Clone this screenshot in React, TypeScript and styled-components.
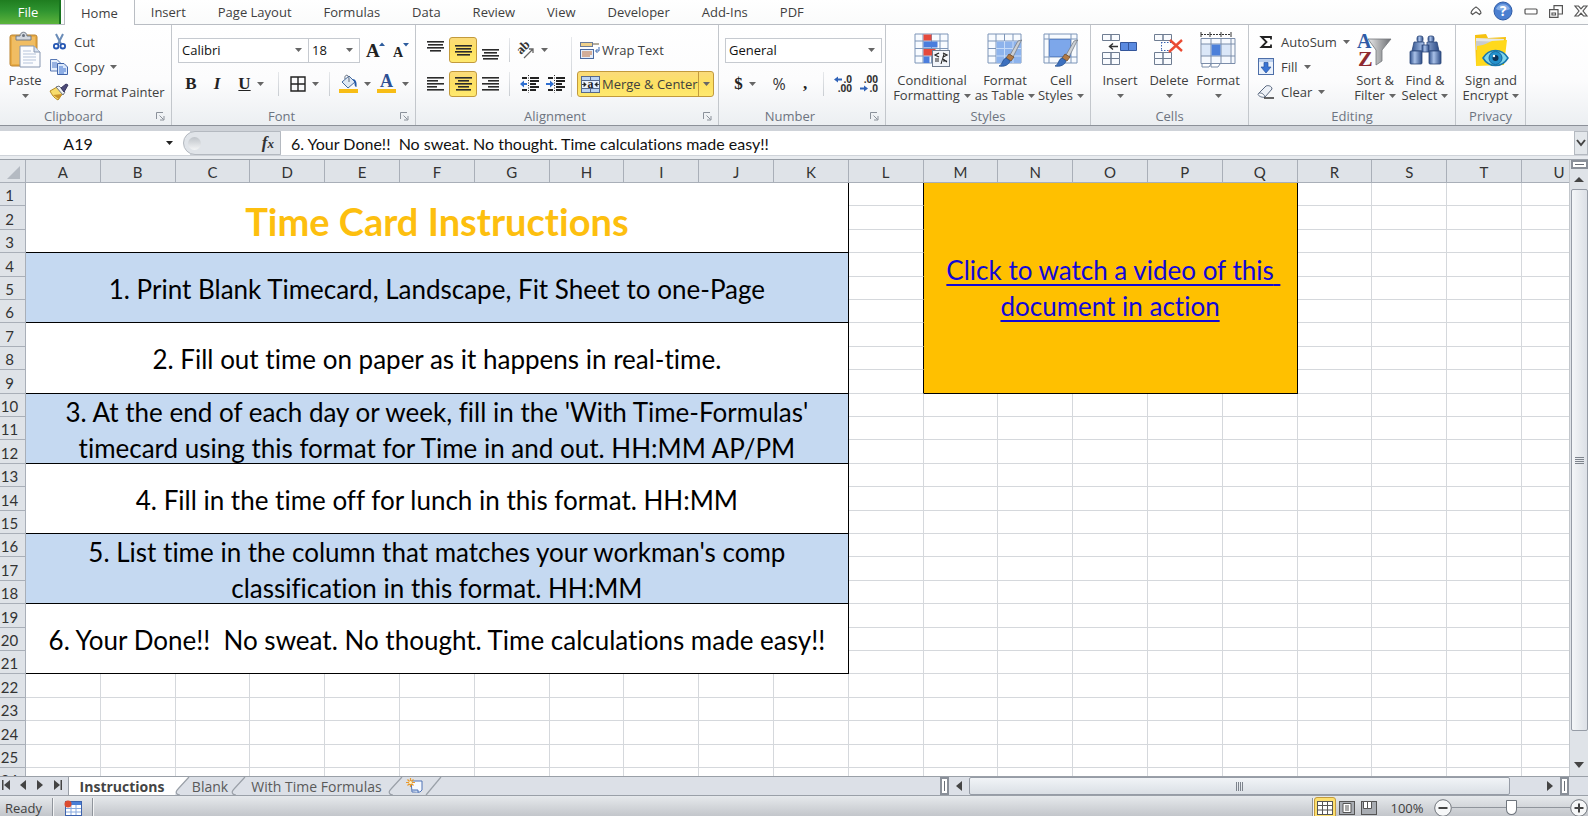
import React from "react";
import styled, { createGlobalStyle, css } from "styled-components";

const ui = `"Open Sans", "Noto Sans", sans-serif`;
const sheet = `Lato, "Open Sans", sans-serif`;

const Global = createGlobalStyle`
  *, *::before, *::after { box-sizing: border-box; }
  body {
    margin: 0;
    background: #fff;
    font-family: ${ui};
    font-size: 13px;
    font-variant-ligatures: none;
    color: #3f3f3f;
    overflow: hidden;
  }
  button, select, input { font: inherit; font-variant-ligatures: none; color: inherit; }
  button { border: 0; background: none; padding: 0; margin: 0; }
  svg { display: block; flex: none; overflow: visible; }
`;

const Window = styled.div`
  display: flex;
  flex-direction: column;
  height: 100vh;
  min-height: 500px;
  overflow: hidden;
`;

/* ---------- tab strip ---------- */

const TabStrip = styled.header`
  display: flex;
  height: 25px;
  flex: none;
  background: linear-gradient(#fff, #fafbfb);
  border-bottom: 1px solid #b9bdc3;
`;

const FileTab = styled.button`
  width: 61px;
  height: 24px;
  padding-right: 5px;
  color: #fff;
  background: linear-gradient(#1f7d20, #2f9430 45%, #5db43c);
  box-shadow: inset -2px 0 #16731d;
`;

const TabList = styled.nav`
  display: flex;
  margin-left: 3px;
`;

const Tab = styled.button<{ $active?: boolean }>`
  height: 24px;
  padding: 0 16px;
  ${(p) =>
    p.$active &&
    css`
      height: 25px;
      background: #fff;
      border: 1px solid #b9bdc3;
      border-top: 0;
      border-bottom: 0;
    `}
`;

const WindowTools = styled.div`
  display: flex;
  align-items: center;
  gap: 11px;
  margin-left: auto;
  height: 22px;
`;

/* ---------- ribbon ---------- */

const Ribbon = styled.section`
  display: flex;
  flex: none;
  height: 101px;
  overflow: hidden;
  background: linear-gradient(#fff, #fcfcfd 55%, #eceff2);
  border-bottom: 1px solid #8c9199;
`;

const GroupBox = styled.section<{ $width: number }>`
  display: flex;
  flex-direction: column;
  flex: none;
  width: ${(p) => p.$width}px;
  border-right: 1px solid #c3c7cc;
`;

const GroupBody = styled.div<{ $pad?: number }>`
  display: flex;
  flex: 1;
  padding: 4px 0 0 ${(p) => p.$pad ?? 4}px;
`;

const Caption = styled.footer<{ $launcher?: boolean }>`
  position: relative;
  height: 18px;
  line-height: 18px;
  padding-right: ${(p) => (p.$launcher ? 24 : 0)}px;
  text-align: center;
  color: #6d7480;
`;

const Launcher = styled.button`
  position: absolute;
  right: 6px;
  bottom: 4px;
`;

const BigButton = styled.button<{ $width: number }>`
  display: flex;
  flex-direction: column;
  align-items: center;
  flex: none;
  width: ${(p) => p.$width}px;
  padding-top: 3px;
  line-height: 15px;
  white-space: nowrap;
`;

const IconBox = styled.span`
  display: flex;
  align-items: center;
  justify-content: center;
  height: 36px;
  margin-bottom: 5px;
`;

const BigLine = styled.span`
  display: flex;
  align-items: center;
  gap: 4px;
  height: 15px;
`;

const SmallStack = styled.div`
  display: flex;
  flex-direction: column;
  align-items: flex-start;
`;

const EditingStack = styled(SmallStack)`
  width: 93px;
`;

const SmallButton = styled.button`
  display: flex;
  align-items: center;
  gap: 6px;
  height: 25px;
  white-space: nowrap;
`;

const IconSlot = styled.span`
  display: flex;
  justify-content: center;
  width: 18px;
`;

const Rows = styled.div`
  display: flex;
  flex-direction: column;
  gap: 8px;
  padding-top: 8px;
`;

const Row = styled.div`
  display: flex;
  align-items: center;
  height: 26px;
`;

const Tool = styled.button<{ $width: number; $on?: boolean }>`
  display: flex;
  align-items: center;
  justify-content: center;
  gap: 6px;
  flex: none;
  width: ${(p) => p.$width}px;
  height: 26px;
  ${(p) =>
    p.$on &&
    css`
      background: linear-gradient(#fbdb7a, #fde162 50%, #ffe96f);
      border: 1px solid #c29a3c;
      border-radius: 3px;
    `}
`;

const GlyphTool = styled(Tool)`
  font-family: "Liberation Serif", serif;
  font-size: 17px;
  font-weight: bold;
  color: #222;
`;

const Percent = styled.span`
  font-size: 16px;
  color: #333;
`;

const Divider = styled.span`
  flex: none;
  width: 1px;
  height: 24px;
  margin: 0 6px;
  background: linear-gradient(#e6e8eb, #c9cdd2);
`;

const TallDivider = styled(Divider)`
  height: 60px;
  margin: 8px 5px 0 3px;
`;

const PickerBox = styled.span<{ $width: number }>`
  display: flex;
  align-items: center;
  width: ${(p) => p.$width}px;
  height: 25px;
  padding-right: 6px;
  border: 1px solid #c6cad0;
  background: #fff;
  & + & { margin-left: -1px; }
`;

const Picker = styled.select`
  appearance: none;
  flex: 1;
  min-width: 0;
  height: 23px;
  padding: 0 3px;
  border: 0;
  background: none;
  color: #111;
`;

const LabelTool = styled.button`
  display: flex;
  align-items: center;
  gap: 2px;
  height: 26px;
  padding-left: 3px;
  white-space: nowrap;
`;

const MergeBox = styled.div`
  display: flex;
  height: 26px;
  background: linear-gradient(#fbdb7a, #fde162 50%, #ffe96f);
  border: 1px solid #c29a3c;
  border-radius: 3px;
`;

const MergeMain = styled.button`
  display: flex;
  align-items: center;
  gap: 2px;
  width: 120px;
  padding-left: 3px;
  white-space: nowrap;
`;

const MergeMore = styled.button`
  display: flex;
  align-items: center;
  justify-content: center;
  width: 15px;
  border-left: 1px solid #c29a3c;
`;

/* ---------- formula bar ---------- */

const FormulaBar = styled.section`
  display: flex;
  flex: none;
  height: 34px;
  padding: 5px 0;
  background: #cfd3d9;
  border-bottom: 1px solid #9aa0a8;
  box-shadow: inset 0 -3px #e8ebef;
  font-family: ${sheet};
  font-size: 16px;
  color: #111;
`;

const NameBox = styled.label`
  display: flex;
  align-items: center;
  width: 190px;
  height: 24px;
  padding-right: 14px;
  background: #fff;
`;

const NameInput = styled.input`
  width: 156px;
  margin-right: 10px;
  border: 0;
  outline: 0;
  background: none;
  text-align: center;
`;

const FxPill = styled.div`
  display: flex;
  align-items: center;
  justify-content: space-between;
  width: 98px;
  height: 24px;
  margin-left: -7px;
  padding: 0 6px 0 4px;
  background: #e0e4e9;
  border: 1px solid #b4b9c0;
  border-radius: 12px 0 0 12px;
`;

const Knob = styled.span`
  width: 13px;
  height: 13px;
  border-radius: 50%;
  background: linear-gradient(#bfc4ca, #f4f5f6);
`;

const FxButton = styled.button`
  font: italic bold 17px "Liberation Serif", serif;
  color: #333;
  small { font-size: 13px; }
`;

const FormulaInput = styled.input`
  flex: 1;
  min-width: 0;
  height: 24px;
  padding: 0 10px;
  border: 0;
  outline: 0;
  background: #fff;
`;

const ExpandButton = styled.button`
  display: flex;
  align-items: center;
  justify-content: center;
  width: 14px;
  height: 24px;
  background: #e3e7eb;
  border: 1px solid #b4b9c0;
`;

/* ---------- worksheet ---------- */

const SheetArea = styled.main`
  display: flex;
  flex: 1;
  min-height: 0;
`;

const GridView = styled.div`
  flex: 1;
  min-width: 0;
  overflow: hidden;
`;

const Grid = styled.table`
  width: calc(100% + 28px);
  table-layout: fixed;
  border-collapse: separate;
  border-spacing: 0;
  font-family: ${sheet};
`;

const headCell = css`
  font-size: 15px;
  line-height: 20px;
  font-weight: normal;
  color: #333;
  background: #dfe3e8;
  border-right: 1px solid #a9afb8;
  border-bottom: 1px solid #a9afb8;
`;

const CornerCell = styled.td`
  width: 26px;
  height: 23px;
  padding: 0 5px 3px 0;
  vertical-align: bottom;
  ${headCell}
  svg { margin-left: auto; }
`;

const ColHead = styled.th`
  height: 23px;
  padding: 2px 0 0;
  ${headCell}
`;

const SheetRow = styled.tr`
  height: 23px;
  &:nth-child(5n + 2), &:nth-child(5n + 4) { height: 24px; }
`;

const RowHead = styled.th`
  padding: 2px 6px 0 0;
  text-align: center;
  ${headCell}
`;

const Cell = styled.td<{ $edge?: boolean }>`
  padding: 0;
  border-right: 1px solid ${(p) => (p.$edge ? "#000" : "#d5d8dc")};
  border-bottom: 1px solid #d5d8dc;
`;

const MergedCell = styled.td<{ $shaded?: boolean }>`
  padding: 0 8px;
  text-align: center;
  white-space: pre-wrap;
  font-size: 26px;
  line-height: 36px;
  color: #000;
  background: ${(p) => (p.$shaded ? "#c5d9f1" : "#fff")};
  border-right: 1px solid #000;
  border-bottom: 1px solid #000;
`;

const CellText = styled.div`
  height: 69px;
  padding-top: 2px;
  display: flex;
  align-items: center;
  justify-content: center;
`;

const TitleText = styled(CellText)`
  padding-top: 6px;
  font-size: 38px;
  font-weight: bold;
  color: #fdbf0f;
`;

const VideoCell = styled(MergedCell)`
  background: #ffc000;
`;

const VideoLink = styled.a`
  color: #1208d8;
  text-decoration: underline;
  text-decoration-thickness: 2px;
  text-underline-offset: 4px;
`;

/* ---------- scroll bars, sheet tabs, status ---------- */

const VScroll = styled.aside`
  display: flex;
  flex-direction: column;
  align-items: center;
  flex: none;
  width: 19px;
  padding-bottom: 1px;
  background: #dfe3e8;
  border-left: 1px solid #c3c7cc;
`;

const SplitBox = styled.button<{ $tall?: boolean }>`
  display: flex;
  align-items: center;
  justify-content: center;
  flex: none;
  width: ${(p) => (p.$tall ? 9 : 17)}px;
  height: ${(p) => (p.$tall ? 18 : 9)}px;
  background: #fff;
  border: 2px solid #8a9099;
  &::after {
    content: "";
    width: ${(p) => (p.$tall ? 1 : 9)}px;
    height: ${(p) => (p.$tall ? 10 : 1)}px;
    background: #6b7078;
  }
`;

const ScrollButton = styled.button`
  display: flex;
  align-items: center;
  justify-content: center;
  flex: none;
  width: 20px;
  height: 20px;
`;

const VTrack = styled.div`
  flex: 1;
  width: 17px;
  padding-bottom: 24px;
`;

const VThumb = styled.div`
  display: flex;
  align-items: center;
  justify-content: center;
  height: 100%;
  background: linear-gradient(90deg, #f4f6f8, #dce0e6);
  border: 1px solid #969ca6;
  border-radius: 2px;
`;

const BottomBar = styled.footer`
  display: flex;
  flex: none;
  height: 20px;
  background: #dce0e7;
  border-top: 1px solid #9aa0a8;
  border-bottom: 1px solid #9aa0a8;
`;

const SheetNav = styled.div`
  display: flex;
  align-items: center;
  width: 69px;
  padding-bottom: 2px;
  border-right: 1px solid #9aa0a8;
`;

const NavButton = styled.button`
  display: flex;
  align-items: center;
  justify-content: center;
  width: 17px;
  height: 16px;
  &:first-child { width: 14px; }
`;

const SheetTabs = styled.nav`
  display: flex;
`;

const SheetTab = styled.button<{ $active?: boolean; $width: number }>`
  display: flex;
  align-items: center;
  justify-content: center;
  width: ${(p) => p.$width}px;
  height: 18px;
  font-size: 14px;
  white-space: nowrap;
  color: #5a5a5a;
  ${(p) =>
    p.$active &&
    css`
      font-weight: bold;
      color: #444;
      background: #fff;
    `}
`;

const HScroll = styled.div`
  display: flex;
  align-items: center;
  width: calc(40% - 6px);
  margin-left: auto;
  margin-right: 19px;
`;

const HTrack = styled.div`
  flex: 1;
  padding-right: 30px;
`;

const HThumb = styled.div`
  display: flex;
  align-items: center;
  justify-content: center;
  height: 18px;
  background: linear-gradient(#f1f4f7, #dadfe5);
  border: 1px solid #969ca6;
  border-radius: 2px;
`;

const StatusBar = styled.footer`
  display: flex;
  align-items: center;
  flex: none;
  height: 20px;
  padding: 3px 0 0 5px;
  overflow: hidden;
  background: linear-gradient(#e6e9ec, #c3c6cb);
`;

const StatusSep = styled.span`
  flex: none;
  width: 2px;
  height: 20px;
  background: #8f949b;
  border-right: 1px solid #f3f4f5;
`;

const StatusLabel = styled.span`
  width: 47px;
`;

const MacroButton = styled.button`
  width: 38px;
  display: flex;
  justify-content: center;
`;

const StatusRight = styled.div`
  display: flex;
  align-items: center;
  margin-left: auto;
`;

const ViewButton = styled.button<{ $on?: boolean }>`
  display: flex;
  align-items: center;
  justify-content: center;
  width: 22px;
  height: 22px;
  border: 1px solid ${(p) => (p.$on ? "#c29a3c" : "transparent")};
  border-radius: 3px;
  background: ${(p) => (p.$on ? "#fde070" : "none")};
`;

const ZoomLabel = styled.button`
  width: 54px;
  text-align: center;
`;

const Slider = styled.input`
  appearance: none;
  width: 118px;
  height: 18px;
  margin: 0;
  background: linear-gradient(#8f949b, #8f949b) center / 100% 1px no-repeat;
  &::-webkit-slider-thumb {
    appearance: none;
    width: 11px;
    height: 15px;
    background: #fff;
    border: 1px solid #6f757d;
    border-radius: 1px 1px 6px 6px;
  }
`;

/* ---------- drawings ---------- */

const Down = ({ dark }: { dark?: boolean }) => (
  <svg width="7" height="4" viewBox="0 0 7 4" aria-hidden="true">
    <path d="M0 0h7L3.5 4z" fill={dark ? "#222" : "#666"} />
  </svg>
);

const LaunchIcon = () => (
  <svg width="9" height="9" viewBox="0 0 9 9" fill="none" stroke="#8b919a">
    <path d="M.5 7V.5H7M3.5 3.5l4 4M8 4v4H4" />
  </svg>
);

const PasteIcon = () => (
  <svg width="32" height="36" viewBox="0 0 32 36">
    <rect x="1" y="3" width="27" height="31" rx="2" fill="#e9ac45" stroke="#bb8433" />
    <path d="M3 5h23v27H3z" fill="#f0bd63" />
    <path d="M7 8V4h4c0-5 7-5 7 0h4v4z" fill="#d3d8df" stroke="#737b87" />
    <circle cx="14.500" cy="3.500" r="1.500" fill="#68717f" />
    <path d="M11 14h14l6 6v15H11z" fill="#fbfcfe" stroke="#8696b0" />
    <path d="M25 14v6h6" fill="#d8e2f0" stroke="#8696b0" />
    <path d="M14 19h8M14 22h13M14 25h13M14 28h13M14 31h10" stroke="#b5c3d9" />
  </svg>
);

const CutIcon = () => (
  <svg width="13" height="16" viewBox="0 0 13 16" fill="none">
    <path d="M3 0l5 10M10 0L5 10" stroke="#6b8cb8" strokeWidth="2" />
    <circle cx="3.200" cy="12.200" r="2.300" stroke="#2456b3" strokeWidth="1.800" />
    <circle cx="9.800" cy="12.200" r="2.300" stroke="#2456b3" strokeWidth="1.800" />
  </svg>
);

const CopyIcon = () => (
  <svg width="18" height="16" viewBox="0 0 18 16">
    <path d="M.5.5H7L10.500 4v8H.5z" fill="#e6eefb" stroke="#5878b4" />
    <path d="M2 4h5M2 6h6M2 8h6" stroke="#4b77c9" />
    <path d="M7.500 4.500H14L17.500 8v7.500h-10z" fill="#dbe8fb" stroke="#3f63a8" />
    <path d="M9 8h4M9 10h7M9 12h7M9 14h5" stroke="#3f72cf" />
  </svg>
);

const BrushIcon = () => (
  <svg width="18" height="16" viewBox="0 0 18 16">
    <path d="M0 7l7-4 6 6-5 7C4 14 2 11 0 7z" fill="#f7dc6c" stroke="#b58a24" />
    <path d="M3 11l6 4 3-5z" fill="#c9922a" />
    <path d="M6 3l3-1 6 6-2 3z" fill="#eef1f5" stroke="#6d7480" />
    <path d="M11 4l5-4 2 1-4 7z" fill="#4c4a78" stroke="#37355e" />
  </svg>
);

const GrowA = ({ small }: { small?: boolean }) => (
  <svg width="19" height="20" viewBox="0 0 19 20">
    <text x="0" y="17" fontFamily="Liberation Serif, serif" fontWeight="bold" fontSize={small ? 14 : 19} fill="#222">A</text>
    <path d={small ? "M10 3h6l-3 3.500z" : "M13 6h6l-3-3.500z"} fill="#2d5c9e" />
  </svg>
);

const BorderIcon = () => (
  <svg width="16" height="16" viewBox="0 0 16 16" fill="none" stroke="#222" strokeWidth="1.400">
    <path d="M1 1h14v14H1zM8 1v14M1 8h14" />
  </svg>
);

const FillColorIcon = () => (
  <svg width="19" height="18" viewBox="0 0 19 18">
    <path d="M3 7l7-6 6 6-7 6z" fill="#dfe9f5" stroke="#46699d" />
    <path d="M6 4c-1-5 4-5 4 0v3" fill="none" stroke="#5e6a7c" />
    <path d="M13 4c4 0 5 3 4.500 8-2 0-2-3-2-5z" fill="#245aa8" />
    <path d="M0 14h19v4H0z" fill="#f7bd16" />
  </svg>
);

const FontColorIcon = () => (
  <svg width="19" height="18" viewBox="0 0 19 18">
    <text x="9.500" y="12" textAnchor="middle" fontFamily="Liberation Serif, serif" fontWeight="bold" fontSize="18" fill="#2d4f93">A</text>
    <path d="M0 14h19v4H0z" fill="#f7bd16" />
  </svg>
);

const barSets: Record<string, [number, number, number][]> = {
  top: [[0, 0, 17], [1, 3, 15], [0, 6, 17], [3, 9, 11]],
  middle: [[0, 4, 17], [1, 7, 15], [0, 10, 17], [2, 13, 13]],
  bottom: [[0, 8, 17], [2, 11, 13], [0, 14, 17], [1, 17, 15]],
  left: [[0, 2, 17], [0, 5, 11], [0, 8, 17], [0, 11, 10], [0, 14, 17]],
  center: [[0, 2, 17], [3, 5, 11], [0, 8, 17], [3, 11, 11], [1, 14, 15]],
  right: [[0, 2, 17], [6, 5, 11], [0, 8, 17], [6, 11, 11], [0, 14, 17]],
};

const Bars = ({ kind }: { kind: string }) => (
  <svg width="17" height="19" viewBox="0 0 17 19">
    {barSets[kind].map(([x, y, w]) => (
      <rect key={y} x={x} y={y} width={w} height="1.600" fill="#2b2b2b" />
    ))}
  </svg>
);

const OrientIcon = () => (
  <svg width="19" height="18" viewBox="0 0 19 18">
    <text transform="translate(5 14) rotate(-45)" fontFamily="Liberation Serif, serif" fontWeight="bold" fontSize="13" fill="#333">ab</text>
    <path d="M8 17l9-9M17 12V8h-4" fill="none" stroke="#666" strokeWidth="1.300" />
  </svg>
);

const IndentIcon = ({ inward }: { inward?: boolean }) => (
  <svg width="19" height="18" viewBox="0 0 19 18">
    <path d="M8.500 0v18" stroke="#333" strokeDasharray="1 1.500" />
    <path d="M2 3h5M10 3h9M10 6h9M10 9h6M10 12h9M2 15h5M10 15h6" stroke="#222" strokeWidth="1.800" />
    <path d={inward ? "M8 9L4 5.500V8H0v2h4v2.500z" : "M0 9l4-3.500V8h3v2H4v2.500z"} fill="#2f6fd0" />
  </svg>
);

const WrapIcon = () => (
  <svg width="20" height="18" viewBox="0 0 20 18">
    <rect x=".5" y="1.500" width="12" height="4" fill="#f0d18a" stroke="#6b7c99" />
    <path d="M13 3h6" stroke="#6b5a3c" />
    <rect x=".5" y="8.500" width="13" height="9" fill="#e4edf9" stroke="#4a6aa0" />
    <path d="M2 11h10M2 13h10M2 15h8" stroke="#c06e39" />
    <path d="M19 6v4h-3M17.500 8L15.500 10l2 2" fill="none" stroke="#3566b0" />
  </svg>
);

const MergeIcon = () => (
  <svg width="19" height="17" viewBox="0 0 19 17">
    <rect x=".5" y=".5" width="18" height="16" fill="#bcd4f4" stroke="#56698c" />
    <path d="M0 4.500h19M0 12.500h19M9.500 0v4M9.500 13v4" stroke="#56698c" />
    <rect x="1" y="5" width="17" height="7" fill="#eaf2fd" />
    <path d="M1 8.500h4M14 8.500h4M3 6.500v4l2-2zM16 6.500v4l-2-2z" stroke="#222" fill="#222" strokeWidth=".8" />
    <text x="9.500" y="12" textAnchor="middle" fontFamily="Liberation Serif, serif" fontWeight="bold" fontSize="12" fill="#222">a</text>
  </svg>
);

const DecimalIcon = ({ less }: { less?: boolean }) => (
  <svg width="20" height="18" viewBox="0 0 20 18">
    <g fontFamily="Open Sans, sans-serif" fontWeight="bold" fontSize="10" fill="#333" textAnchor="end">
      <text x="19" y="8">{less ? ".00" : ".0"}</text>
      <text x="19" y="17">{less ? ".0" : ".00"}</text>
    </g>
    <path d={less ? "M9 13.500l-4-3v2H1v2h4v2z" : "M1 4.500l4-3v2h4v2H5v2z"} fill="#2f62b8" />
  </svg>
);

const GridLines = ({ head }: { head?: boolean }) => (
  <>
    <path d="M1 1h33v29H1z" fill="#f8fbff" stroke="#7d95b8" />
    <path d={head ? "M1 6h33M1 24h33M6 1v29M28 1v29" : "M1 8h33M1 15.500h33M1 23h33M9 1v29M17.500 1v29M26 1v29"} stroke="#7d95b8" />
  </>
);

const PaintBrush = () => (
  <>
    <path d="M34 8L26 24l-3-2 8-14 4-1z" fill="#ccd0d5" stroke="#777d86" strokeWidth=".8" />
    <path d="M22 21l5 3-3 4-5-3z" fill="#b27a45" stroke="#6f4c2c" strokeWidth=".8" />
    <path d="M12 33c4-1 3-7 7-8l4 3c-1 4-6 6-11 5z" fill="#3d70be" stroke="#25508f" strokeWidth=".8" />
  </>
);

const ConditionalIcon = () => (
  <svg width="36" height="34" viewBox="0 0 36 34">
    <GridLines />
    <path d="M9.500 1.500h8v6h-8z" fill="#e5493c" />
    <path d="M9.500 8.500h14v6h-14z" fill="#4a7ddd" />
    <path d="M9.500 16h12v6.500h-12z" fill="#e5493c" />
    <path d="M9.500 23.500h6V30h-6z" fill="#4a7ddd" />
    <rect x="18.500" y="17.500" width="17" height="16" fill="#f2f5fa" stroke="#707c8f" />
    <path d="M25 20l-4 2 4 2M21 26h4M21 28h4M29 20l4 2-4 2M29 26l4 3M29 28h4" fill="none" stroke="#222" strokeWidth="1.200" />
    <path d="M27 31l3-10" stroke="#222" />
  </svg>
);

const TableIcon = () => (
  <svg width="36" height="34" viewBox="0 0 36 34">
    <GridLines />
    <path d="M9.500 8.500H34V30H9.500z" fill="#8db3ec" />
    <path d="M9 15.500h25M9 23h25M17.500 8v22M26 8v22" stroke="#c6dbf8" />
    <PaintBrush />
  </svg>
);

const StylesIcon = () => (
  <svg width="36" height="34" viewBox="0 0 36 34">
    <GridLines head />
    <path d="M6.500 6.500h21v17h-21z" fill="#7da7ea" stroke="#5f88cc" />
    <PaintBrush />
  </svg>
);

const Blocks = ({ y, rows }: { y: number; rows: number }) => (
  <g fill="#f9fbfe" stroke="#6f7d92">
    {Array.from({ length: rows }, (_, i) => (
      <path key={i} d={`M.5 ${y + i * 6}h8.500v6H.5zM9 ${y + i * 6}h8.500v6H9z`} />
    ))}
  </g>
);

const InsertIcon = () => (
  <svg width="36" height="34" viewBox="0 0 36 34">
    <Blocks y={1.5} rows={1} />
    <Blocks y={19.5} rows={2} />
    <path d="M18.500 9.500h8v8h-8zM26.500 9.500h8v8h-8z" fill="#5a8ae0" stroke="#33559a" />
    <path d="M8 13.500h8M11 10.500l-3.500 3 3.500 3" fill="none" stroke="#333" strokeWidth="1.400" />
  </svg>
);

const DeleteIcon = () => (
  <svg width="30" height="34" viewBox="0 0 30 34">
    <Blocks y={1.5} rows={1} />
    <Blocks y={19.5} rows={2} />
    <path d="M7 9.500h11M7 17.500h11M7.500 9v9" stroke="#3d62ae" strokeDasharray="1.500 1.500" />
    <path d="M16 7l12 11M28 7L15 19" stroke="#ea4b33" strokeWidth="2.400" />
  </svg>
);

const FormatIcon = () => (
  <svg width="36" height="36" viewBox="0 0 36 36">
    <path d="M1 0v5M31 0v5M10 0v5M21 0v5" stroke="#333" />
    <path d="M1 2.500h30" stroke="#333" strokeDasharray="2 1" />
    <path d="M1 6.500h34v25H1z" fill="#f6f9fe" stroke="#7b8daa" />
    <path d="M2 12h9v12H2zM21 12h9v12h-9z" fill="#dbe7f8" />
    <path d="M1 12h34M1 24h34M11 6v25M21 6v25M31 6v25" stroke="#7b8daa" />
    <path d="M11.500 12.500h9v11h-9z" fill="#4d80da" />
    <path d="M2 32v3h7l2-3M11 32v3h7l2-3" fill="#fff" stroke="#7b8daa" />
  </svg>
);

const SigmaIcon = () => (
  <svg width="12" height="12" viewBox="0 0 12 12" fill="none" stroke="#222" strokeWidth="1.800">
    <path d="M11 3.500V1H1.500l5 5-5 5H11V8.500" />
  </svg>
);

const FillIcon = () => (
  <svg width="16" height="17" viewBox="0 0 16 17">
    <rect x=".5" y=".5" width="15" height="16" fill="#eaf1fb" stroke="#4d6ea8" />
    <path d="M1 1h14v3H1z" fill="#bacfee" />
    <path d="M6 4.500h4V9h3l-5 6-5-6h3z" fill="#3a74d4" stroke="#28539c" strokeWidth=".7" />
  </svg>
);

const ClearIcon = () => (
  <svg width="18" height="14" viewBox="0 0 18 14">
    <path d="M1 9l8-8c2-1 6 0 6 3l-7 8c-3 1-7-1-7-3z" fill="#eef2f8" stroke="#5a6880" />
    <path d="M1 9c1-2 6-1 7 3" fill="#fff" stroke="#5a6880" />
    <path d="M7 13h10" stroke="#333" strokeWidth="1.500" />
  </svg>
);

const SortIcon = () => (
  <svg width="36" height="34" viewBox="0 0 36 34">
    <defs>
      <linearGradient id="funnel"><stop stopColor="#e9e9e9" /><stop offset="1" stopColor="#6c6f73" /></linearGradient>
    </defs>
    <path d="M11 6h23L25 17v11l-6 4V17z" fill="url(#funnel)" stroke="#74777b" strokeWidth=".8" />
    <text x="0" y="15" fontFamily="Liberation Serif, serif" fontWeight="bold" fontSize="20" fill="#2f5ba6">A</text>
    <text x="1" y="33" fontFamily="Liberation Serif, serif" fontWeight="bold" fontSize="22" fill="#8f2a30">Z</text>
  </svg>
);

const FindIcon = () => (
  <svg width="33" height="32" viewBox="0 0 33 32">
    <defs>
      <linearGradient id="lens"><stop stopColor="#34558f" /><stop offset=".4" stopColor="#a9c1e8" /><stop offset="1" stopColor="#2c4b85" /></linearGradient>
    </defs>
    <g fill="url(#lens)" stroke="#2c467a" strokeWidth=".8">
      <rect x="8" y="2" width="6" height="6" rx="2" />
      <rect x="19" y="2" width="6" height="6" rx="2" />
      <path d="M5 8h10v9H3zM18 8h10l2 9H18z" />
      <rect x="13" y="11" width="7" height="7" />
      <rect x="1" y="17" width="12" height="13" rx="1" />
      <rect x="20" y="17" width="12" height="13" rx="1" />
    </g>
  </svg>
);

const PrivacyIcon = () => (
  <svg width="34" height="35" viewBox="0 0 34 35">
    <path d="M1 2l11-1 2 4 18-1-2 27-28 1z" fill="#f6c211" />
    <path d="M2 5l28 1-1 8H2z" fill="#e4e6e8" />
    <path d="M2 8l28 1-1 8H2z" fill="#c8cbce" />
    <path d="M2 33l1-20c9-1 12-4 15-5l15-1-3 25z" fill="#ffd91c" />
    <path d="M9 25c6-10 19-10 25 0-6 10-19 10-25 0z" fill="#7fd6ec" stroke="#1777ad" strokeWidth="1.500" />
    <circle cx="21.500" cy="25" r="6.500" fill="#2391cc" stroke="#14659e" />
    <circle cx="21.500" cy="25" r="3" fill="#0c3256" />
    <circle cx="20" cy="23" r="1.200" fill="#fff" />
  </svg>
);

const CollapseIcon = () => (
  <svg width="12" height="10" viewBox="0 0 12 10">
    <path d="M1 7c0-2 3-5 5-6 2 1 5 4 5 6L9.500 8.500 6 6 2.500 8.500z" fill="#fff" stroke="#555" strokeWidth="1.200" />
  </svg>
);

const HelpIcon = () => (
  <svg width="20" height="20" viewBox="0 0 20 20">
    <circle cx="10" cy="10" r="9" fill="#4a7fd0" stroke="#2e5ba6" />
    <path d="M3 8a7.500 7.500 0 0 1 14 0c-4 2-10 2-14 0z" fill="#86aee6" />
    <text x="10" y="15" textAnchor="middle" fontFamily="Open Sans, sans-serif" fontWeight="bold" fontSize="14" fill="#fff">?</text>
  </svg>
);

const MinIcon = () => (
  <svg width="14" height="8" viewBox="0 0 14 8">
    <rect x="1" y="2" width="12" height="5" rx="1" fill="#fff" stroke="#555" strokeWidth="1.200" />
  </svg>
);

const RestoreIcon = () => (
  <svg width="14" height="13" viewBox="0 0 14 13" fill="#fff" stroke="#555" strokeWidth="1.200">
    <path d="M5 .600h8.400V9H5z" />
    <path d="M.600 4.600H9V12.400H.600zM3 8h3.500v2H3z" />
  </svg>
);

const CloseIcon = () => (
  <svg width="14" height="12" viewBox="0 0 14 12">
    <path d="M1 1h3.500L7 3.800 9.500 1H13L9 6l4 5H9.500L7 8.200 4.500 11H1l4-5z" fill="#fff" stroke="#555" strokeWidth="1.200" />
  </svg>
);

const Triangle = ({ dir, bar }: { dir: "left" | "right" | "up" | "down"; bar?: boolean }) => {
  const d = {
    left: "M8 0L2 5l6 5z",
    right: "M2 0l6 5-6 5z",
    up: "M0 8l5-5 5 5z",
    down: "M0 2h10L5 8z",
  }[dir];
  return (
    <svg width="10" height="10" viewBox="0 0 10 10" fill="#444">
      <path d={d} />
      {bar && <path d={dir === "left" ? "M0 0h1.500v10H0z" : "M8.500 0H10v10H8.500z"} />}
    </svg>
  );
};

const Grip = ({ turned }: { turned?: boolean }) => (
  <svg width="9" height="9" viewBox="0 0 9 9" stroke="#7d838c">
    <path d={turned ? "M0 1.500h9M0 3.500h9M0 5.500h9M0 7.500h9" : "M1.500 0v9M3.500 0v9M5.500 0v9M7.500 0v9"} />
  </svg>
);

const Edge = ({ active, last }: { active?: boolean; last?: boolean }) => (
  <svg width="14" height="18" viewBox="0 0 14 18">
    {active && <path d="M0 0h14L3 12Q0 15 0 18z" fill="#fff" />}
    <path
      d={last ? "M15 0L0 18" : "M14 0L3 12Q0 15 2 17q1 1 3 1"}
      fill="none"
      stroke="#9aa0a8"
      strokeWidth="1.200"
    />
  </svg>
);

const NewSheetIcon = () => (
  <svg width="17" height="16" viewBox="0 0 17 16">
    <path d="M5 3h11v9l-2 2H6z" fill="#f7faff" stroke="#4f72b5" />
    <path d="M6 12h6v3" fill="#c6d6ef" stroke="#4f72b5" />
    <path d="M4.500 0v9M0 4.500h9M1.500 1.500l6 6M7.500 1.500l-6 6" stroke="#e89a2f" strokeWidth="1.200" />
    <circle cx="4.500" cy="4.500" r="1.500" fill="#fff3c8" />
  </svg>
);

const MacroIcon = () => (
  <svg width="18" height="16" viewBox="0 0 18 16">
    <rect x="1.500" y="1.500" width="16" height="14" fill="#fff" stroke="#3c62ad" />
    <path d="M2 2h15v3H2z" fill="#4a7fd6" />
    <path d="M2 8.500h15M2 12h15M7 5v10M12 5v10" stroke="#86a8de" />
    <circle cx="4" cy="4" r="3.500" fill="#dc4a2e" />
  </svg>
);

const ViewIcon = ({ kind }: { kind: "grid" | "page" | "break" }) => (
  <svg width="16" height="14" viewBox="0 0 16 14" fill="#fff" stroke="#555">
    <rect x=".5" y=".5" width="15" height="13" fill={kind === "grid" ? "#fff" : "#a9adb3"} />
    {kind === "grid" && <path d="M.5 4.500h15M.5 9h15M5.500.5v13M10.500.5v13" />}
    {kind === "page" && <path d="M4 2.500h8v9H4zM6 5h4M6 7h4M6 9h4" />}
    {kind === "break" && <path d="M2.500.5h4v7h-4zM6.500.5h4v7h-4z" />}
  </svg>
);

const ZoomIcon = ({ plus }: { plus?: boolean }) => (
  <svg width="18" height="18" viewBox="0 0 18 18">
    <circle cx="9" cy="9" r="8.300" fill="#f6f7f8" stroke="#70757c" />
    <path d={plus ? "M4.500 9h9M9 4.500v9" : "M4.500 9h9"} stroke="#444" strokeWidth="2" />
  </svg>
);

/* ---------- page ---------- */

const Group = ({
  name,
  width,
  pad,
  launcher,
  children,
}: {
  name: string;
  width: number;
  pad?: number;
  launcher?: boolean;
  children: React.ReactNode;
}) => (
  <GroupBox $width={width} aria-label={name}>
    <GroupBody $pad={pad}>{children}</GroupBody>
    <Caption $launcher={launcher}>
      {name}
      {launcher && (
        <Launcher aria-label={`${name} options`}>
          <LaunchIcon />
        </Launcher>
      )}
    </Caption>
  </GroupBox>
);

const Big = ({ icon, top, bottom, width }: { icon: React.ReactNode; top: string; bottom?: string; width: number }) => (
  <BigButton $width={width}>
    <IconBox>{icon}</IconBox>
    <BigLine>{top}</BigLine>
    <BigLine>
      {bottom}
      <Down />
    </BigLine>
  </BigButton>
);

const Small = ({ icon, label, more }: { icon: React.ReactNode; label: string; more?: boolean }) => (
  <SmallButton>
    <IconSlot>{icon}</IconSlot>
    {label}
    {more && <Down />}
  </SmallButton>
);

const Choice = ({ label, value, width }: { label: string; value: string; width: number }) => (
  <PickerBox $width={width}>
    <Picker aria-label={label} defaultValue={value}>
      <option>{value}</option>
    </Picker>
    <Down />
  </PickerBox>
);

const tabs = ["Home", "Insert", "Page Layout", "Formulas", "Data", "Review", "View", "Developer", "Add-Ins", "PDF"];
const columns = "ABCDEFGHIJKLMNOPQRSTU".split("");
const rowNumbers = Array.from({ length: 26 }, (_, i) => i + 1);

const steps: Record<number, string> = {
  4: "1. Print Blank Timecard, Landscape, Fit Sheet to one-Page",
  7: "2. Fill out time on paper as it happens in real-time.",
  10: "3. At the end of each day or week, fill in the 'With Time-Formulas' timecard using this format for Time in and out. HH:MM AP/PM",
  13: "4. Fill in the time off for lunch in this format. HH:MM",
  16: "5. List time in the column that matches your workman's comp classification in this format. HH:MM",
  19: "6. Your Done!!  No sweat. No thought. Time calculations made easy!!",
};

const WorksheetRow = ({ n }: { n: number }) => {
  const cells: React.ReactNode[] = [];
  if (n === 1) {
    cells.push(
      <MergedCell key="title" colSpan={11} rowSpan={3}>
        <TitleText>Time Card Instructions</TitleText>
      </MergedCell>
    );
  } else if (steps[n]) {
    cells.push(
      <MergedCell key="step" colSpan={11} rowSpan={3} $shaded={n % 2 === 0}>
        <CellText>{steps[n]}</CellText>
      </MergedCell>
    );
  }
  columns.forEach((c, i) => {
    if (i < 11 && n <= 21) return;
    if (i >= 12 && i <= 16 && n <= 9) {
      if (n === 1 && i === 12) {
        cells.push(
          <VideoCell key="video" colSpan={5} rowSpan={9}>
            <VideoLink href="#video">Click to watch a video of this document in action</VideoLink>
          </VideoCell>
        );
      }
      return;
    }
    cells.push(<Cell key={c} $edge={c === "L" && n <= 9} />);
  });
  return (
    <SheetRow>
      <RowHead scope="row">{n}</RowHead>
      {cells}
    </SheetRow>
  );
};

export default function App() {
  return (
    <Window>
      <Global />
      <TabStrip>
        <FileTab>File</FileTab>
        <TabList>
          {tabs.map((t) => (
            <Tab key={t} $active={t === "Home"}>
              {t}
            </Tab>
          ))}
        </TabList>
        <WindowTools>
          <button aria-label="Minimize the ribbon"><CollapseIcon /></button>
          <button aria-label="Help"><HelpIcon /></button>
          <button aria-label="Minimize"><MinIcon /></button>
          <button aria-label="Restore"><RestoreIcon /></button>
          <button aria-label="Close"><CloseIcon /></button>
        </WindowTools>
      </TabStrip>

      <Ribbon>
        <Group name="Clipboard" width={172} pad={0} launcher>
          <Big icon={<PasteIcon />} top="Paste" width={50} />
          <SmallStack>
            <Small icon={<CutIcon />} label="Cut" />
            <Small icon={<CopyIcon />} label="Copy" more />
            <Small icon={<BrushIcon />} label="Format Painter" />
          </SmallStack>
        </Group>
        <Group name="Font" width={244} pad={6} launcher>
          <Rows>
            <Row>
              <Choice label="Font" value="Calibri" width={131} />
              <Choice label="Font size" value="18" width={52} />
              <Tool $width={30} aria-label="Grow font"><GrowA /></Tool>
              <Tool $width={24} aria-label="Shrink font"><GrowA small /></Tool>
            </Row>
            <Row>
              <GlyphTool $width={26}>B</GlyphTool>
              <GlyphTool $width={26}><i>I</i></GlyphTool>
              <GlyphTool $width={42}><u>U</u><Down /></GlyphTool>
              <Divider />
              <Tool $width={38} aria-label="Borders"><BorderIcon /><Down /></Tool>
              <Divider />
              <Tool $width={38} aria-label="Fill color"><FillColorIcon /><Down /></Tool>
              <Tool $width={38} aria-label="Font color"><FontColorIcon /><Down /></Tool>
            </Row>
          </Rows>
        </Group>
        <Group name="Alignment" width={303} pad={6} launcher>
          <Rows>
            <Row>
              <Tool $width={27} aria-label="Top align"><Bars kind="top" /></Tool>
              <Tool $width={28} $on aria-label="Middle align"><Bars kind="middle" /></Tool>
              <Tool $width={26} aria-label="Bottom align"><Bars kind="bottom" /></Tool>
              <Divider />
              <Tool $width={32} aria-label="Orientation"><OrientIcon /><Down /></Tool>
            </Row>
            <Row>
              <Tool $width={27} aria-label="Align left"><Bars kind="left" /></Tool>
              <Tool $width={28} $on aria-label="Center"><Bars kind="center" /></Tool>
              <Tool $width={26} aria-label="Align right"><Bars kind="right" /></Tool>
              <Divider />
              <Tool $width={26} aria-label="Decrease indent"><IndentIcon /></Tool>
              <Tool $width={26} aria-label="Increase indent"><IndentIcon inward /></Tool>
            </Row>
          </Rows>
          <TallDivider />
          <Rows>
            <LabelTool><WrapIcon />Wrap Text</LabelTool>
            <MergeBox>
              <MergeMain><MergeIcon />Merge &amp; Center</MergeMain>
              <MergeMore aria-label="Merge options"><Down /></MergeMore>
            </MergeBox>
          </Rows>
        </Group>
        <Group name="Number" width={167} pad={6} launcher>
          <Rows>
            <Row>
              <Choice label="Number format" value="General" width={157} />
            </Row>
            <Row>
              <GlyphTool $width={40}>$<Down /></GlyphTool>
              <Tool $width={28}><Percent>%</Percent></Tool>
              <GlyphTool $width={24}>,</GlyphTool>
              <Divider />
              <Tool $width={26} aria-label="Increase decimal"><DecimalIcon /></Tool>
              <Tool $width={26} aria-label="Decrease decimal"><DecimalIcon less /></Tool>
            </Row>
          </Rows>
        </Group>
        <Group name="Styles" width={205} pad={4}>
          <Big icon={<ConditionalIcon />} top="Conditional" bottom="Formatting" width={84} />
          <Big icon={<TableIcon />} top="Format" bottom="as Table" width={62} />
          <Big icon={<StylesIcon />} top="Cell" bottom="Styles" width={50} />
        </Group>
        <Group name="Cells" width={158} pad={4}>
          <Big icon={<InsertIcon />} top="Insert" width={50} />
          <Big icon={<DeleteIcon />} top="Delete" width={48} />
          <Big icon={<FormatIcon />} top="Format" width={50} />
        </Group>
        <Group name="Editing" width={207} pad={8}>
          <EditingStack>
            <Small icon={<SigmaIcon />} label="AutoSum" more />
            <Small icon={<FillIcon />} label="Fill" more />
            <Small icon={<ClearIcon />} label="Clear" more />
          </EditingStack>
          <Big icon={<SortIcon />} top="Sort &amp;" bottom="Filter" width={50} />
          <Big icon={<FindIcon />} top="Find &amp;" bottom="Select" width={50} />
        </Group>
        <Group name="Privacy" width={70} pad={4}>
          <Big icon={<PrivacyIcon />} top="Sign and" bottom="Encrypt" width={62} />
        </Group>
      </Ribbon>

      <FormulaBar>
        <NameBox>
          <NameInput aria-label="Name box" defaultValue="A19" />
          <Down dark />
        </NameBox>
        <FxPill>
          <Knob />
          <FxButton aria-label="Insert function">f<small>x</small></FxButton>
        </FxPill>
        <FormulaInput aria-label="Formula" defaultValue={steps[19]} />
        <ExpandButton aria-label="Expand formula bar">
          <svg width="10" height="8" viewBox="0 0 10 8" fill="none" stroke="#444" strokeWidth="2"><path d="M1 1l4 5 4-5" /></svg>
        </ExpandButton>
      </FormulaBar>

      <SheetArea>
        <GridView>
          <Grid>
            <thead>
              <tr>
                <CornerCell>
                  <svg width="13" height="13" viewBox="0 0 13 13"><path d="M13 0v13H0z" fill="#b4bac2" /></svg>
                </CornerCell>
                {columns.map((c) => <ColHead key={c} scope="col">{c}</ColHead>)}
              </tr>
            </thead>
            <tbody>
              {rowNumbers.map((n) => <WorksheetRow key={n} n={n} />)}
            </tbody>
          </Grid>
        </GridView>
        <VScroll>
          <SplitBox aria-label="Split rows" />
          <ScrollButton aria-label="Scroll up"><Triangle dir="up" /></ScrollButton>
          <VTrack><VThumb><Grip turned /></VThumb></VTrack>
          <ScrollButton aria-label="Scroll down"><Triangle dir="down" /></ScrollButton>
        </VScroll>
      </SheetArea>

      <BottomBar>
        <SheetNav>
          <NavButton aria-label="First sheet"><Triangle dir="left" bar /></NavButton>
          <NavButton aria-label="Previous sheet"><Triangle dir="left" /></NavButton>
          <NavButton aria-label="Next sheet"><Triangle dir="right" /></NavButton>
          <NavButton aria-label="Last sheet"><Triangle dir="right" bar /></NavButton>
        </SheetNav>
        <SheetTabs>
          <SheetTab $active $width={106}>Instructions</SheetTab>
          <Edge active />
          <SheetTab $width={42}>Blank</SheetTab>
          <Edge />
          <SheetTab $width={143}>With Time Formulas</SheetTab>
          <Edge />
          <SheetTab $width={24} aria-label="Insert worksheet"><NewSheetIcon /></SheetTab>
          <Edge last />
        </SheetTabs>
        <HScroll>
          <SplitBox $tall aria-label="Split columns" />
          <ScrollButton aria-label="Scroll left"><Triangle dir="left" /></ScrollButton>
          <HTrack><HThumb><Grip /></HThumb></HTrack>
          <ScrollButton aria-label="Scroll right"><Triangle dir="right" /></ScrollButton>
          <SplitBox $tall aria-label="Split columns at end" />
        </HScroll>
      </BottomBar>

      <StatusBar>
        <StatusLabel>Ready</StatusLabel>
        <StatusSep />
        <MacroButton aria-label="Record macro"><MacroIcon /></MacroButton>
        <StatusSep />
        <StatusRight>
          <StatusSep />
          <ViewButton $on aria-label="Normal view"><ViewIcon kind="grid" /></ViewButton>
          <ViewButton aria-label="Page layout view"><ViewIcon kind="page" /></ViewButton>
          <ViewButton aria-label="Page break preview"><ViewIcon kind="break" /></ViewButton>
          <ZoomLabel>100%</ZoomLabel>
          <button aria-label="Zoom out"><ZoomIcon /></button>
          <Slider type="range" aria-label="Zoom" min={0} max={200} defaultValue={100} />
          <button aria-label="Zoom in"><ZoomIcon plus /></button>
        </StatusRight>
      </StatusBar>
    </Window>
  );
}
